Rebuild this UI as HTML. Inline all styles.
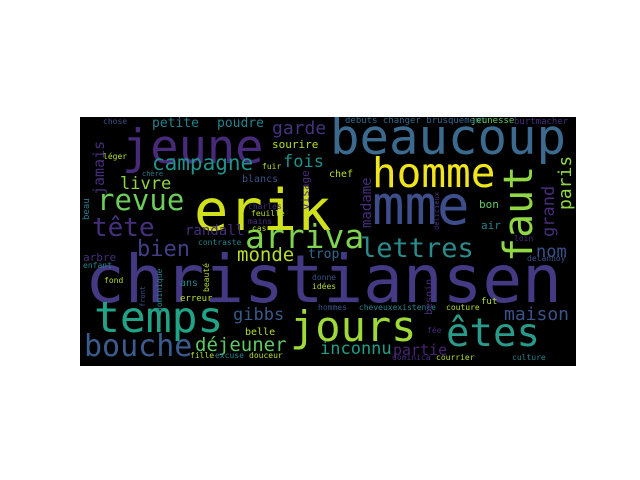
<!DOCTYPE html>
<html><head><meta charset="utf-8"><style>
html,body{margin:0;padding:0;background:#fff;width:640px;height:480px;overflow:hidden}
#c{position:absolute;left:80px;top:117px;width:496px;height:249px;background:#000;overflow:hidden}
#c span{position:absolute;white-space:nowrap;line-height:1;font-family:"DejaVu Sans Mono","Liberation Mono",monospace}
.v{transform:rotate(-90deg);transform-origin:0 0}
</style></head><body>
<div id="c">
<span style="left:5px;top:130px;font-size:66px;color:#443983">christiansen</span>
<span style="left:114px;top:66px;font-size:57px;color:#d0e11c">erik</span>
<span style="left:42px;top:7px;font-size:47px;color:#472a7a">jeune</span>
<span style="left:250px;top:-4px;font-size:49px;color:#3b6a8f">beaucoup</span>
<span style="left:292px;top:36px;font-size:41px;color:#f0e51d">homme</span>
<span style="left:292px;top:62px;font-size:54px;color:#3d4e8a">mme</span>
<span class="v" style="left:419px;top:145px;font-size:40px;color:#90d743">faut</span>
<span style="left:14px;top:180px;font-size:43px;color:#20a386">temps</span>
<span style="left:210px;top:189px;font-size:42px;color:#a0da39">jours</span>
<span style="left:366px;top:197px;font-size:39px;color:#2a9a8a">êtes</span>
<span style="left:4px;top:215px;font-size:30px;color:#3b5b8d">bouche</span>
<span style="left:115px;top:219px;font-size:19px;color:#5ec962">déjeuner</span>
<span style="left:240px;top:224px;font-size:17px;color:#1f9e89">inconnu</span>
<span style="left:313px;top:226px;font-size:15px;color:#482475">partie</span>
<span style="left:424px;top:189px;font-size:18px;color:#3b528b">maison</span>
<span style="left:280px;top:118px;font-size:27px;color:#2a8a8c">lettres</span>
<span style="left:456px;top:127px;font-size:17px;color:#3b528b">nom</span>
<span style="left:165px;top:103px;font-size:33px;color:#7fd34e">arriva</span>
<span style="left:57px;top:122px;font-size:22px;color:#433e85">bien</span>
<span style="left:12px;top:98px;font-size:26px;color:#46307e">tête</span>
<span style="left:17px;top:69px;font-size:29px;color:#6ccd5a">revue</span>
<span style="left:40px;top:59px;font-size:17px;color:#8fd744">livre</span>
<span style="left:72px;top:36px;font-size:21px;color:#20928c">campagne</span>
<span style="left:192px;top:3px;font-size:18px;color:#46327e">garde</span>
<span style="left:203px;top:37px;font-size:17px;color:#21918c">fois</span>
<span class="v" style="left:12px;top:78px;font-size:15px;color:#472d7b">jamais</span>
<span style="left:72px;top:0px;font-size:13px;color:#26828e">petite</span>
<span style="left:137px;top:0px;font-size:13px;color:#26828e">poudre</span>
<span style="left:192px;top:22px;font-size:11px;color:#b5de2b">sourire</span>
<span style="left:23px;top:1px;font-size:8px;color:#3b528b">chose</span>
<span style="left:23px;top:36px;font-size:8px;color:#b5de2b">léger</span>
<span style="left:62px;top:54px;font-size:7px;color:#2a788e">chère</span>
<span style="left:182px;top:46px;font-size:8px;color:#b5de2b">fuir</span>
<span style="left:162px;top:58px;font-size:10px;color:#3b528b">blancs</span>
<span class="v" style="left:220px;top:93px;font-size:11px;color:#472d7b">visage</span>
<span class="v" style="left:3px;top:103px;font-size:9px;color:#26828e">beau</span>
<span style="left:168px;top:86px;font-size:8px;color:#472d7b">charles</span>
<span style="left:171px;top:93px;font-size:8px;color:#b5de2b">feuille</span>
<span style="left:168px;top:101px;font-size:8px;color:#472d7b">mains</span>
<span style="left:172px;top:108px;font-size:8px;color:#b5de2b">cas</span>
<span style="left:105px;top:107px;font-size:14px;color:#472d7b">randall</span>
<span style="left:118px;top:122px;font-size:8px;color:#26828e">contraste</span>
<span style="left:157px;top:129px;font-size:19px;color:#b8de29">monde</span>
<span style="left:228px;top:131px;font-size:13px;color:#31688e">trop</span>
<span style="left:3px;top:135px;font-size:11px;color:#472d7b">arbre</span>
<span style="left:3px;top:145px;font-size:8px;color:#26828e">enfant</span>
<span style="left:153px;top:190px;font-size:17px;color:#38598c">gibbs</span>
<span style="left:165px;top:211px;font-size:10px;color:#b5de2b">belle</span>
<span style="left:110px;top:235px;font-size:8px;color:#b5de2b">fille</span>
<span style="left:135px;top:235px;font-size:8px;color:#26828e">excuse</span>
<span style="left:169px;top:235px;font-size:8px;color:#b5de2b">douceur</span>
<span style="left:24px;top:160px;font-size:8px;color:#b5de2b">fond</span>
<span style="left:100px;top:162px;font-size:10px;color:#26828e">ans</span>
<span class="v" style="left:123px;top:175px;font-size:8px;color:#b5de2b">beauté</span>
<span style="left:100px;top:178px;font-size:9px;color:#b5de2b">erreur</span>
<span class="v" style="left:76px;top:195px;font-size:8px;color:#26828e">dominique</span>
<span class="v" style="left:60px;top:190px;font-size:7px;color:#3b528b">front</span>
<span style="left:232px;top:166px;font-size:8px;color:#b5de2b">idées</span>
<span style="left:232px;top:157px;font-size:8px;color:#3b528b">donne</span>
<span style="left:238px;top:187px;font-size:8px;color:#3b528b">hommes</span>
<span style="left:250px;top:187px;font-size:8px;color:#26828e">&nbsp;&nbsp;&nbsp;&nbsp;&nbsp;&nbsp;cheveuxexistence</span>
<span style="left:366px;top:187px;font-size:8px;color:#b5de2b">couture</span>
<span style="left:401px;top:181px;font-size:9px;color:#b5de2b">fut</span>
<span class="v" style="left:345px;top:198px;font-size:10px;color:#472d7b">besoin</span>
<span style="left:447px;top:138px;font-size:8px;color:#3b528b">delannoy</span>
<span style="left:434px;top:118px;font-size:8px;color:#472d7b">loin</span>
<span style="left:347px;top:210px;font-size:8px;color:#472d7b">fée</span>
<span style="left:312px;top:237px;font-size:8px;color:#472d7b">dominica</span>
<span style="left:356px;top:237px;font-size:8px;color:#b5de2b">courrier</span>
<span style="left:432px;top:237px;font-size:8px;color:#26828e">culture</span>
<span class="v" style="left:461px;top:120px;font-size:17px;color:#472d7b">grand</span>
<span class="v" style="left:477px;top:93px;font-size:18px;color:#90d743">paris</span>
<span class="v" style="left:280px;top:111px;font-size:14px;color:#472d7b">madame</span>
<span class="v" style="left:354px;top:113px;font-size:7px;color:#472d7b">délicieux</span>
<span style="left:249px;top:53px;font-size:10px;color:#b5de2b">chef</span>
<span style="left:399px;top:82px;font-size:11px;color:#5ec962">bon</span>
<span style="left:401px;top:103px;font-size:11px;color:#26828e">air</span>
<span style="left:265px;top:0px;font-size:9px;color:#31688e">débuts changer brusquement</span>
<span style="left:391px;top:0px;font-size:9px;color:#5ec962">jeunesse</span>
<span style="left:434px;top:1px;font-size:9px;color:#472d7b">burtmacher</span>
</div>
</body></html>
